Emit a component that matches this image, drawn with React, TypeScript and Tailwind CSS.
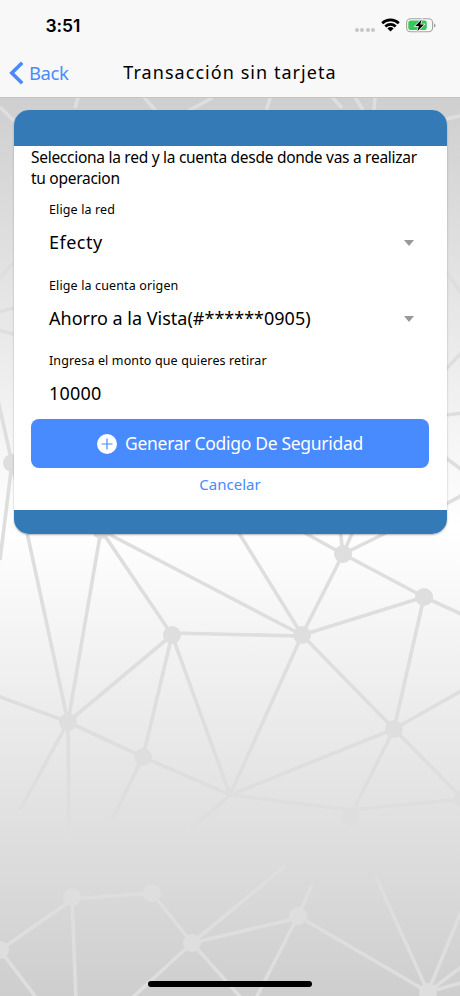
import * as React from "react";
import { clsx } from "clsx";

type Point = [number, number];

const nodes: Point[] = [
  [172, 635], [302, 635], [343, 554], [424, 597], [68, 722], [143, 757], [394, 729],
  [101, 530], [12, 463], [350, 817], [463, 799], [72, 897], [152, 893], [0, 950],
  [192, 943], [298, 916], [428, 992],
];

const links: [Point, Point][] = [
  [[101, 530], [172, 635]],
  [[101, 530], [302, 635]],
  [[101, 530], [68, 722]],
  [[12, 463], [68, 722]],
  [[12, 463], [-2, 400]],
  [[12, 463], [0, 560]],
  [[172, 633], [302, 636]],
  [[172, 635], [68, 722]],
  [[172, 635], [143, 757]],
  [[172, 635], [230, 795]],
  [[302, 635], [343, 554]],
  [[302, 635], [424, 597]],
  [[302, 635], [234, 525]],
  [[302, 635], [394, 729]],
  [[302, 635], [230, 795]],
  [[343, 554], [424, 597]],
  [[343, 554], [296, 528]],
  [[343, 554], [339, 520]],
  [[343, 554], [358, 520]],
  [[343, 554], [396, 528]],
  [[424, 597], [470, 618]],
  [[424, 597], [394, 729]],
  [[394, 729], [470, 686]],
  [[394, 729], [230, 795]],
  [[394, 729], [350, 817]],
  [[394, 729], [463, 799]],
  [[68, 722], [-5, 695]],
  [[68, 722], [143, 757]],
  [[68, 722], [69, 840]],
  [[68, 722], [20, 810]],
  [[143, 757], [230, 795]],
  [[143, 757], [112, 820]],
  [[230, 795], [350, 810]],
  [[350, 810], [463, 799]],
  [[230, 795], [190, 830]],
  [[446, 369], [470, 344]],
  [[446, 415], [470, 412]],
  [[446, 458], [470, 476]],
  [[446, 504], [470, 491]],
  [[446, 272], [470, 305]],
  [[-2, 280], [14, 262]],
  [[-2, 312], [14, 308]],
  [[-2, 330], [14, 334]],
  [[0, 950], [72, 900]],
  [[0, 950], [38, 1000]],
  [[72, 897], [76, 1000]],
  [[72, 899], [152, 893]],
  [[152, 893], [192, 943]],
  [[192, 943], [298, 918]],
  [[192, 943], [132, 998]],
  [[192, 943], [243, 1000]],
  [[192, 943], [285, 866]],
  [[298, 916], [428, 992]],
  [[298, 916], [255, 1000]],
  [[298, 916], [312, 885]],
  [[428, 992], [376, 877]],
  [[428, 992], [464, 905]],
  [[428, 992], [464, 965]],
  [[428, 992], [464, 982]],
  [[75, 108], [79, 94]],
  [[144, 97], [156, 111]],
  [[188, 111], [212, 98]],
  [[266, 111], [271, 96]],
  [[332, 97], [342, 108]],
  [[355, 97], [363, 110]],
  [[374, 110], [375, 97]],
  [[446, 119], [464, 115]],
  [[0, 107], [14, 121]],
];

function NetworkBackdrop() {
  return (
    <svg
      viewBox="0 0 460 996"
      className="absolute inset-0 h-[996px] w-[460px]"
      aria-hidden="true"
    >
      <g stroke="#dedede" strokeWidth="3.6">
        {links.map(([a, b], i) => (
          <line key={i} x1={a[0]} y1={a[1]} x2={b[0]} y2={b[1]} />
        ))}
      </g>
      <g fill="#dedede">
        {nodes.map(([x, y]) => (
          <circle key={`${x}-${y}`} cx={x} cy={y} r="9" />
        ))}
      </g>
    </svg>
  );
}

function StatusBar() {
  return (
    <div className="flex h-[50px] items-center pl-[45.5px] pr-[24px]">
      <span className="mt-[2px] font-['Inter',sans-serif] text-[17.5px] font-semibold tracking-[-0.1px] text-black">
        3:51
      </span>
      <div className="ml-auto flex items-center">
        <div className="mt-[10px] mr-[6px] flex gap-[1.4px]">
          {[0, 1, 2, 3].map((dot) => (
            <span key={dot} className="size-[4px] rounded-full bg-[#c6c6c8]" />
          ))}
        </div>
        <svg width="19" height="14" viewBox="0 0 19 14" className="mr-[6px]" fill="none" stroke="#000" strokeWidth="2.7">
          <path d="M1.2 5.2a12 12 0 0 1 16.6 0" />
          <path d="M4.3 8.5a7.5 7.5 0 0 1 10.4 0" />
          <path d="M6.4 10.4a4.6 4.6 0 0 1 6.2 0L9.5 13.6Z" fill="#000" stroke="none" />
        </svg>
        <svg width="30" height="15" viewBox="0 0 30 15" fill="none">
          <rect x="0.6" y="0.8" width="26" height="13" rx="4" stroke="#a3a3a5" strokeWidth="1.1" />
          <path d="M28 5.2v4.4q1.6-.8 1.6-2.2T28 5.2Z" fill="#a3a3a5" />
          <rect x="2.3" y="2.5" width="18.5" height="9.6" rx="2.3" fill="#35c759" />
          <path d="M15.6 1.5 9.2 8.1h3.6L11.4 13.2l6.6-6.8h-3.7Z" fill="#000" stroke="#f8f8f8" strokeWidth="1.4" paintOrder="stroke" />
        </svg>
      </div>
    </div>
  );
}

function NavBar() {
  return (
    <div className="relative flex h-[45px] items-center pl-[9px]">
      <button type="button" className="flex items-center text-[#4a8bfc]">
        <svg width="15" height="24" viewBox="0 0 15 24" fill="none" stroke="currentColor" strokeWidth="3.6">
          <path d="M13.2 1.8 2.8 12l10.4 10.2" />
        </svg>
        <span className="ml-[5px] text-[18.5px] tracking-[-0.45px]">Back</span>
      </button>
      <h1 className="absolute inset-x-0 text-center text-[18px] font-[450] tracking-[1.05px] text-black">
        Transacción sin tarjeta
      </h1>
    </div>
  );
}

interface FieldProps {
  label: string;
  value: string;
  select?: boolean;
  valueClassName?: string;
}

function Field({ label, value, select, valueClassName }: FieldProps) {
  return (
    <div className="h-[75.5px] pl-[18px]">
      <div className="h-[20px] text-[12.5px] leading-[21px] tracking-[0.13px]">{label}</div>
      <div className="mt-[11px] flex h-[24px] items-center justify-between">
        <span className={clsx("text-[18px] leading-[24px]", valueClassName)}>{value}</span>
        {select && (
          <span className="mt-[2px] mr-[15px] h-0 w-0 border-x-[5.5px] border-t-[6px] border-x-transparent border-t-[#999]" />
        )}
      </div>
    </div>
  );
}

export default function App() {
  return (
    <div className="relative h-[996px] w-[460px] overflow-hidden bg-linear-to-b from-[#cecece] from-[9%] via-white via-[53%] to-[#cecece] font-['Noto_Sans',sans-serif] text-black">
      <NetworkBackdrop />

      <header className="relative h-[98px] border-b border-[#c4c4c4] bg-[#f8f8f8]">
        <StatusBar />
        <NavBar />
      </header>

      <main className="relative mx-[13.5px] mt-[12px] overflow-hidden rounded-[15px] bg-white shadow-[0_1px_2px_rgba(0,0,0,0.3)]">
        <div className="h-[36px] bg-[#337ab7]" />
        <div className="h-[364px] px-[17.5px]">
          <p className="h-[53px] pt-px text-[15.5px] leading-[21px] tracking-[-0.28px] whitespace-nowrap">
            Selecciona la red y la cuenta desde donde vas a realizar
            <br />
            tu operacion
          </p>
          <Field label="Elige la red" value="Efecty" select valueClassName="tracking-[0.5px]" />
          <Field label="Elige la cuenta origen" value="Ahorro a la Vista(#******0905)" select />
          <div className="h-[69px]">
            <Field label="Ingresa el monto que quieres retirar" value="10000" valueClassName="tracking-[0.2px]" />
          </div>
          <button
            type="button"
            className="flex h-[49px] w-full items-center justify-center rounded-[8px] bg-[#488aff] text-[17.5px] tracking-[-0.3px] whitespace-nowrap text-white"
          >
            <svg width="20" height="20" viewBox="0 0 20 20" className="mr-[8px]">
              <circle cx="10" cy="10" r="10" fill="#fff" />
              <path d="M10 4.5v11M4.5 10h11" stroke="#488aff" strokeWidth="1.2" />
            </svg>
            <span>Generar Codigo De Seguridad</span>
          </button>
          <button type="button" className="block h-[32px] w-full text-center text-[15px] leading-[32px] text-[#488aff]">
            Cancelar
          </button>
        </div>
        <div className="h-[24px] bg-[#337ab7]" />
      </main>

      <div className="absolute bottom-[9px] left-[148px] h-[6px] w-[164px] rounded-full bg-black" />
    </div>
  );
}
